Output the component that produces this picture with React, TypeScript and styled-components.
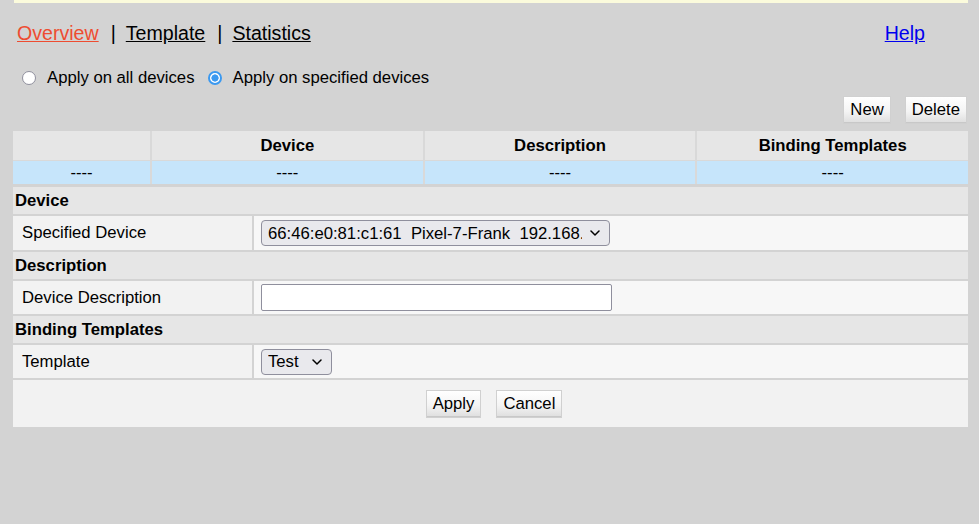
import React from "react";
import styled, { createGlobalStyle } from "styled-components";

const Global = createGlobalStyle`
  html, body { margin: 0; padding: 0; background: #d3d3d3; }
  body { font-family: "Liberation Sans", Arial, sans-serif; color: #000; font-size: 16.7px; }
`;

const Page = styled.div`
  width: 979px;
  height: 524px;
  box-sizing: border-box;
  padding: 0 11px 0 13px;
  background: #d3d3d3;
`;

const TopBar = styled.div`
  height: 3px;
  margin-left: 1px;
  background: #fbfbdc;
`;

const Nav = styled.div`
  display: flex;
  align-items: center;
  justify-content: space-between;
  margin-top: 18px;
  padding: 0 43px 0 4px;
  font-size: 19.6px;
  line-height: 24px;
`;

const NavLinks = styled.div`
  display: flex;
  align-items: center;
`;

const NavLink = styled.a<{ $active?: boolean }>`
  color: ${(p) => (p.$active ? "#ee4c31" : "#000")};
  text-decoration: underline;
  cursor: pointer;
`;

const Sep = styled.span`
  margin: 0 10px 0 12px;
`;

const HelpLink = styled.a`
  color: #0000ee;
  text-decoration: underline;
  cursor: pointer;
`;

const RadioRow = styled.div`
  display: flex;
  align-items: center;
  margin-top: 21px;
  padding-left: 4px;
  font-size: 16.7px;
  line-height: 24px;
`;

const RadioLabel = styled.label`
  display: flex;
  align-items: center;
  margin-right: 8px;
`;

const Radio = styled.input`
  appearance: none;
  -webkit-appearance: none;
  box-sizing: border-box;
  width: 14px;
  height: 14px;
  margin: 0 11px 0 5px;
  border-radius: 50%;
  border: 1.5px solid #8f8f9d;
  background: #fff;
  &:checked {
    border: 2px solid #3b99f0;
    background: radial-gradient(circle, #3b99f0 0 3.3px, #fff 3.9px);
  }
`;

const Toolbar = styled.div`
  display: flex;
  justify-content: flex-end;
  gap: 14px;
  margin-top: 6px;
  padding-right: 1px;
`;

const Btn = styled.button`
  font-family: "Liberation Sans", Arial, sans-serif;
  font-size: 16.7px;
  height: 28px;
  padding: 0 6px;
  color: #000;
  border: 1px solid #d0d0d0;
  border-radius: 0;
  background: linear-gradient(#ffffff 0%, #f4f4f4 55%, #dedede 100%);
  box-shadow: inset 0 -1px 0 #c8c8c8;
  cursor: pointer;
`;

const Panel = styled.div`
  margin-top: 7px;
  display: flex;
  flex-direction: column;
  gap: 2px;
`;

const ListGrid = styled.div`
  display: grid;
  grid-template-columns: 137px 1fr 1fr 1fr;
  grid-template-rows: 29px 23px;
  column-gap: 2px;
  row-gap: 1px;
  background: #d9d9d9;
  margin-bottom: 1px;
`;

const HeadCell = styled.div`
  background: #e6e6e6;
  font-weight: bold;
  display: flex;
  align-items: center;
  justify-content: center;
`;

const DataCell = styled.div`
  background: #c6e5fb;
  display: flex;
  align-items: center;
  justify-content: center;
`;

const SectionTitle = styled.div`
  height: 27px;
  background: #e6e6e6;
  font-weight: bold;
  display: flex;
  align-items: center;
  padding-left: 2px;
`;

const FieldRow = styled.div<{ $h?: number }>`
  display: grid;
  grid-template-columns: 239px 1fr;
  column-gap: 2px;
  height: ${(p) => p.$h ?? 33}px;
`;

const FieldLabel = styled.div`
  background: #f2f2f2;
  display: flex;
  align-items: center;
  padding-left: 9px;
`;

const FieldValue = styled.div`
  background: #f7f7f7;
  display: flex;
  align-items: center;
  padding-left: 7px;
`;

const SelectWrap = styled.div<{ $w: number }>`
  position: relative;
  width: ${(p) => p.$w}px;
  height: 26px;
`;

const Select = styled.select`
  appearance: none;
  -webkit-appearance: none;
  box-sizing: border-box;
  width: 100%;
  height: 100%;
  font-family: "Liberation Sans", Arial, sans-serif;
  font-size: 16.7px;
  color: #000;
  background: #e9e9ed;
  border: 1px solid #8f8f9d;
  border-radius: 4px;
  padding: 0 27px 0 6px;
  outline: none;
`;

const Chevron = styled.svg`
  position: absolute;
  right: 10px;
  top: 50%;
  margin-top: -3px;
  width: 10px;
  height: 6px;
  pointer-events: none;
`;

const TextInput = styled.input`
  font-family: "Liberation Sans", Arial, sans-serif;
  font-size: 16.7px;
  width: 351px;
  height: 27px;
  box-sizing: border-box;
  border: 1px solid #8f8f9d;
  border-radius: 2px;
  background: #fff;
`;

const ActionBar = styled.div`
  height: 47px;
  background: #f2f2f2;
  display: flex;
  align-items: center;
  justify-content: center;
  gap: 15px;
  padding-left: 7px;
`;

function DropDown({ w, children }: { w: number; children: React.ReactNode }) {
  return (
    <SelectWrap $w={w}>
      <Select defaultValue="0">{children}</Select>
      <Chevron viewBox="0 0 10 6">
        <path d="M1 1 L5 5 L9 1" fill="none" stroke="#000" strokeWidth="1.5" strokeLinecap="round" strokeLinejoin="round" />
      </Chevron>
    </SelectWrap>
  );
}

export default function App() {
  return (
    <Page>
      <Global />
      <TopBar />
      <Nav>
        <NavLinks>
          <NavLink $active>Overview</NavLink>
          <Sep>|</Sep>
          <NavLink>Template</NavLink>
          <Sep>|</Sep>
          <NavLink>Statistics</NavLink>
        </NavLinks>
        <HelpLink>Help</HelpLink>
      </Nav>
      <RadioRow>
        <RadioLabel>
          <Radio type="radio" name="apply" />
          Apply on all devices
        </RadioLabel>
        <RadioLabel>
          <Radio type="radio" name="apply" defaultChecked />
          Apply on specified devices
        </RadioLabel>
      </RadioRow>
      <Toolbar>
        <Btn>New</Btn>
        <Btn>Delete</Btn>
      </Toolbar>
      <Panel>
        <ListGrid>
          <HeadCell />
          <HeadCell>Device</HeadCell>
          <HeadCell>Description</HeadCell>
          <HeadCell>Binding Templates</HeadCell>
          <DataCell>----</DataCell>
          <DataCell>----</DataCell>
          <DataCell>----</DataCell>
          <DataCell>----</DataCell>
        </ListGrid>
        <SectionTitle>Device</SectionTitle>
        <FieldRow $h={34}>
          <FieldLabel>Specified Device</FieldLabel>
          <FieldValue>
            <DropDown w={349}>
              <option value="0">66:46:e0:81:c1:61&nbsp;&nbsp;Pixel-7-Frank&nbsp;&nbsp;192.168.1.25</option>
            </DropDown>
          </FieldValue>
        </FieldRow>
        <SectionTitle>Description</SectionTitle>
        <FieldRow>
          <FieldLabel>Device Description</FieldLabel>
          <FieldValue>
            <TextInput type="text" />
          </FieldValue>
        </FieldRow>
        <SectionTitle>Binding Templates</SectionTitle>
        <FieldRow>
          <FieldLabel>Template</FieldLabel>
          <FieldValue>
            <DropDown w={71}>
              <option value="0">Test</option>
            </DropDown>
          </FieldValue>
        </FieldRow>
        <ActionBar>
          <Btn>Apply</Btn>
          <Btn>Cancel</Btn>
        </ActionBar>
      </Panel>
    </Page>
  );
}
